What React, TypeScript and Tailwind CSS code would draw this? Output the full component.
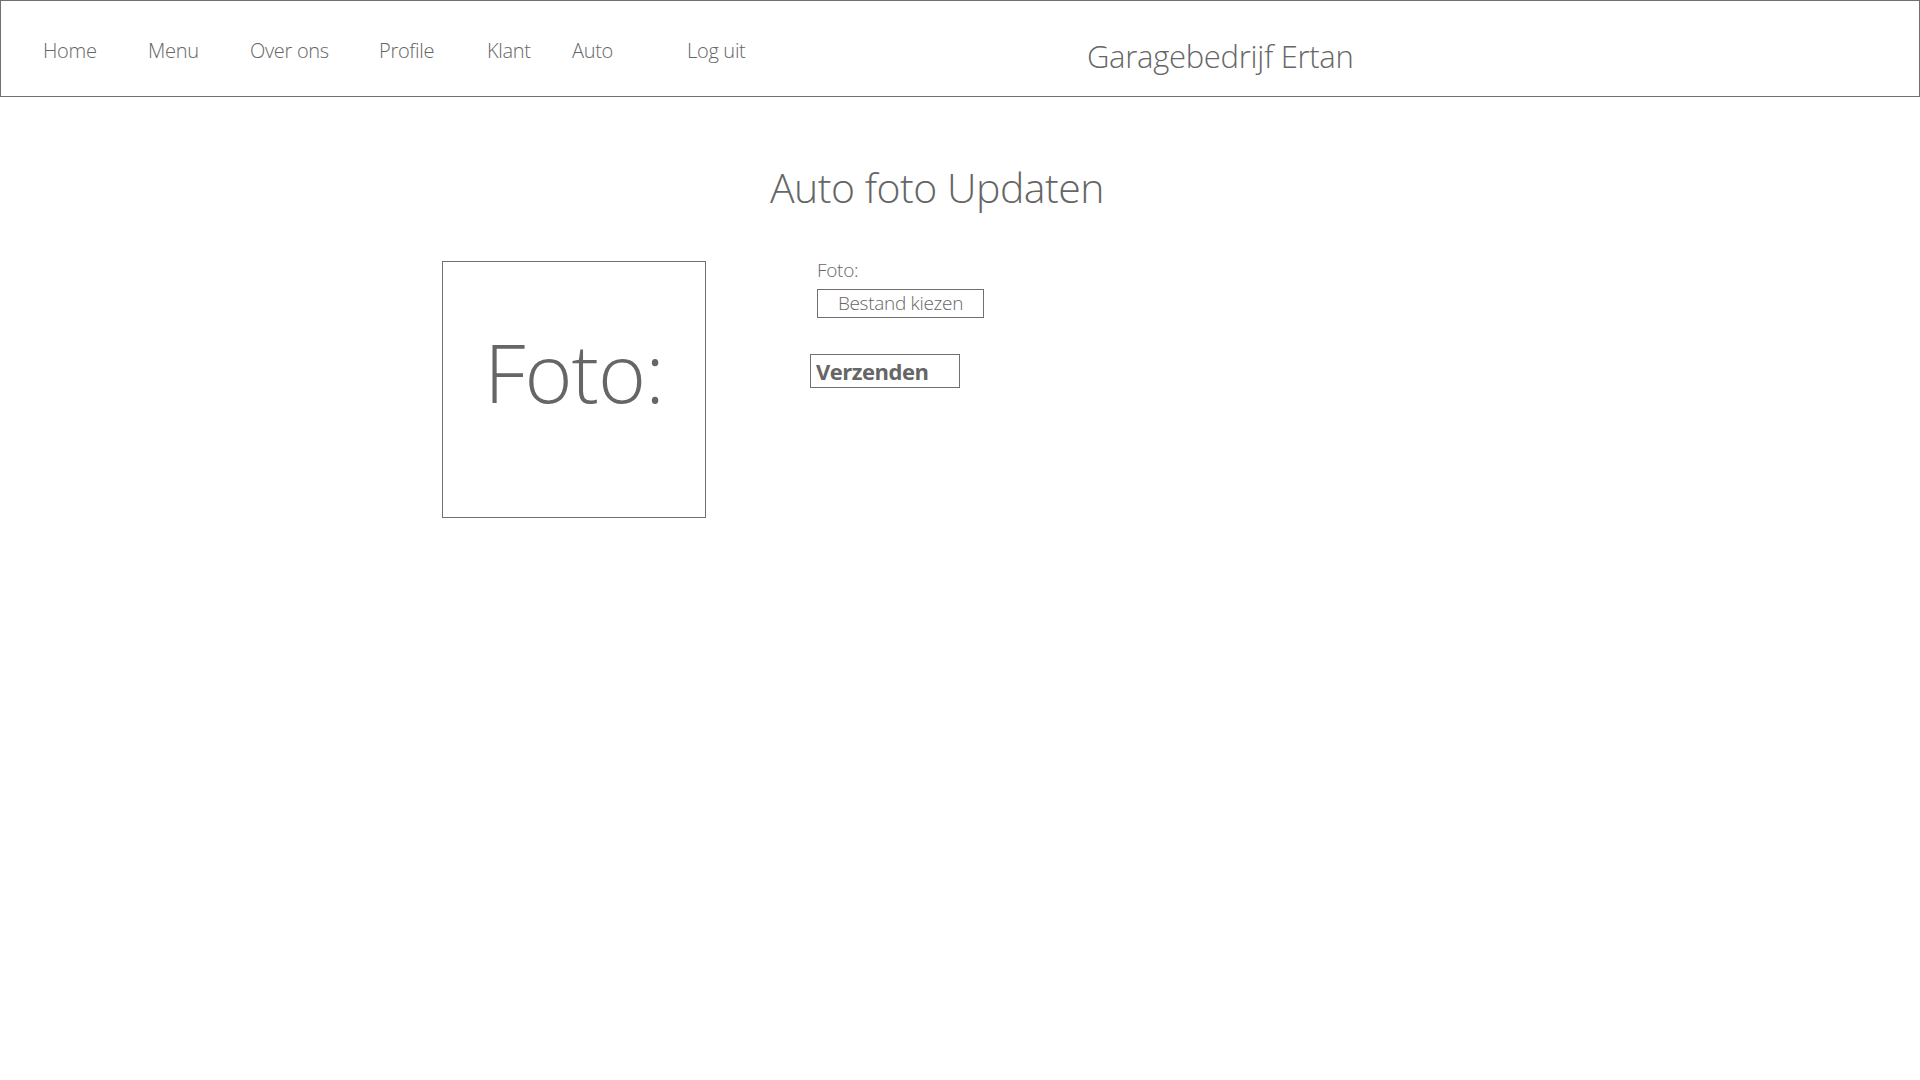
import React from "react";

const font = { fontFamily: '"Open Sans", "Noto Sans", sans-serif' };

export default function App() {
  const nav: [string, string][] = [
    ["Home", "w-[105px]"],
    ["Menu", "w-[102px]"],
    ["Over ons", "w-[129px]"],
    ["Profile", "w-[108px]"],
    ["Klant", "w-[85px]"],
    ["Auto", "w-[115px]"],
    ["Log uit", "w-[120px]"],
  ];
  return (
    <div className="w-[1920px] h-[1080px] bg-white text-[#666666] font-light" style={font}>
      <header className="h-[97px] border border-[#707070] flex items-center">
        <nav className="flex items-center pl-[42px] pt-[5px]">
          {nav.map(([t, w]) => (
            <span key={t} className={`${w} shrink-0 text-[20px] tracking-[-0.3px]`}>{t}</span>
          ))}
        </nav>
        <div className="ml-[280px] text-[31px] tracking-[-0.3px] pt-[16px]">Garagebedrijf Ertan</div>
      </header>
      <main>
        <h1 className="pl-[770px] pt-[60px] text-[41px] tracking-[-0.5px] leading-[60px]">Auto foto Updaten</h1>
        <div className="flex pt-[44px]">
          <div className="ml-[442px] w-[264px] h-[257px] border border-[#707070] flex justify-center pt-[59px]">
            <span className="text-[82px] leading-[100px] tracking-[-1px]">Foto:</span>
          </div>
          <div className="ml-[103px] flex flex-col">
            <div className="ml-[8px] text-[19px] leading-[18px] tracking-[-0.3px]">Foto:</div>
            <div className="ml-[8px] mt-[10px] w-[167px] h-[29px] border border-[#707070] flex items-center justify-center text-[19px] tracking-[-0.3px]">
              Bestand kiezen
            </div>
            <div className="mt-[36px] ml-[1px] w-[150px] h-[34px] border border-[#707070] flex items-center pl-[5px] text-[22px] font-bold tracking-[-0.5px]">
              Verzenden
            </div>
          </div>
        </div>
      </main>
    </div>
  );
}
